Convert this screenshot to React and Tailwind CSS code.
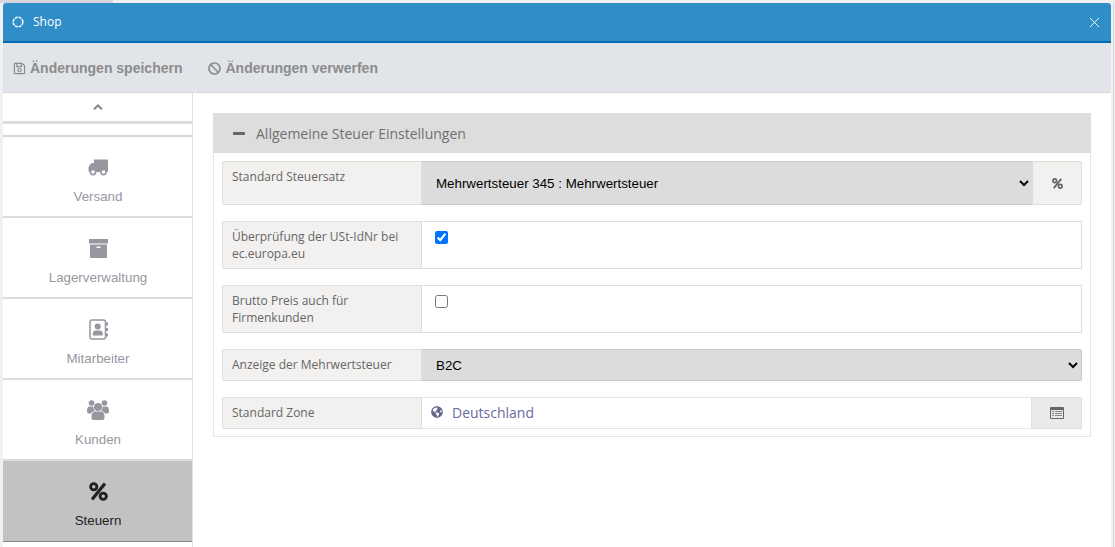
import React from "react";
import { FaGlobeAmericas, FaRegSave, FaBan } from "react-icons/fa";
import { X } from "lucide-react";

const TruckIcon = () => (
  <svg width="20" height="17" viewBox="0 0 20 17" fill="currentColor">
    <path d="M6 0.5h13a1 1 0 0 1 1 1V12a1 1 0 0 1-1 1H2a1.500 1.500 0 0 1-1.500-1.500V8.500L2.500 5C3 4.200 3.600 4 4.500 4H6z" />
    <circle cx="5" cy="13" r="2.600" fill="white" stroke="currentColor" strokeWidth="1.600" />
    <circle cx="15.500" cy="13" r="2.600" fill="white" stroke="currentColor" strokeWidth="1.600" />
  </svg>
);

const ArchiveIcon = () => (
  <svg width="19" height="19" viewBox="0 0 19 19" fill="currentColor">
    <rect x="0" y="0" width="19" height="4.500" />
    <path d="M1 5.500h17V18a1 1 0 0 1-1 1H2a1 1 0 0 1-1-1z" />
    <rect x="7.500" y="7.500" width="4" height="1.500" rx="0.500" fill="white" />
  </svg>
);

const AddressIcon = () => (
  <svg width="19" height="21" viewBox="0 0 19 21" fill="currentColor">
    <rect x="1" y="1" width="15.500" height="19" rx="2" fill="none" stroke="currentColor" strokeWidth="1.500" />
    <circle cx="8.700" cy="7.500" r="3" />
    <path d="M3.800 16.500v-2.200c0-1.600 1.200-2.800 2.800-2.800h4.200c1.600 0 2.900 1.200 2.900 2.800v2.200z" />
    <rect x="17" y="3.500" width="2" height="3" />
    <rect x="17" y="9" width="2" height="3" />
    <rect x="17" y="14.500" width="2" height="3" />
  </svg>
);

const UsersIcon = () => (
  <svg width="22" height="20" viewBox="0 0 22 20" fill="currentColor">
    <circle cx="4.500" cy="3" r="2.800" />
    <circle cx="17.500" cy="3" r="2.800" />
    <circle cx="11" cy="7" r="4" />
    <path d="M0 10.500C0 8 1 6.500 2.500 6.500h3c.4 0 .8.100 1 .3-.2 1.400.5 3 1.400 3.900-2 .6-3.400 1.600-4 2.800H1.500C.6 13.500 0 12.500 0 10.500z" />
    <path d="M22 10.500c0-2.500-1-4-2.500-4h-3c-.4 0-.8.100-1 .3.2 1.400-.5 3-1.400 3.900 2 .6 3.400 1.600 4 2.800h2.400c.9 0 1.500-1 1.500-3z" />
    <path d="M4.500 16c0-3 1.700-4.500 3.500-4.500h6c1.800 0 3.500 1.500 3.500 4.500v2c0 1.200-.8 2-2 2h-9c-1.200 0-2-.8-2-2z" />
  </svg>
);

const PercentIcon = ({ size }) => (
  <svg width={size} height={size} viewBox="0 0 20 20" fill="none" stroke="currentColor">
    <circle cx="5" cy="5" r="3.300" strokeWidth="3" />
    <circle cx="15" cy="15" r="3.300" strokeWidth="3" />
    <path d="M16.800 1.500L3.200 18.500" strokeWidth="3.400" />
  </svg>
);

const ListIcon = () => (
  <svg width="14" height="12" viewBox="0 0 14 12">
    <rect x="0" y="0" width="14" height="12" rx="1" fill="#666" />
    <rect x="1" y="3" width="12" height="8" fill="#e9e9e9" />
    <rect x="2" y="4" width="2" height="1" fill="#888" />
    <rect x="5" y="4" width="7" height="1" fill="#888" />
    <rect x="2" y="6" width="2" height="1" fill="#888" />
    <rect x="5" y="6" width="7" height="1" fill="#888" />
    <rect x="2" y="8" width="2" height="1" fill="#888" />
    <rect x="5" y="8" width="7" height="1" fill="#888" />
  </svg>
);

const menuItems = [
  { label: "Versand", icon: <TruckIcon /> },
  { label: "Lagerverwaltung", icon: <ArchiveIcon /> },
  { label: "Mitarbeiter", icon: <AddressIcon /> },
  { label: "Kunden", icon: <UsersIcon /> },
];

const Label = ({ children, className = "" }) => (
  <div className={`w-[200px] shrink-0 bg-[#f2f1f0] border border-[#e0dcd8] rounded-l-[2px] px-[9px] text-[12px] leading-[17px] text-[#666] font-['Open_Sans',sans-serif] ${className}`}>
    {children}
  </div>
);

const App = () => {
  return (
    <div className="w-[1115px] h-[547px] overflow-hidden bg-[#f1f1f1]">
      {/* Page behind the window */}
      <div className="h-[3px] w-[113px] bg-[#d6d6da]" />
      <div className="flex pl-[3px]">
        <div className="w-[1108px] h-[544px] flex flex-col bg-white rounded-t-[3px] overflow-hidden">
          {/* Title bar */}
          <div className="h-[40px] shrink-0 flex items-center justify-between bg-[#2f8dc7] border-b-2 border-[#0069b4] pl-[9px] pr-[8px] text-white">
            <div className="flex items-center gap-[9px]">
              <svg width="12" height="12" viewBox="0 0 12 12" fill="none">
                <circle cx="6" cy="6" r="4.800" stroke="white" strokeWidth="1.600" strokeDasharray="2.900 0.870" />
              </svg>
              <span className="text-[12px] font-['Open_Sans',sans-serif]">Shop</span>
            </div>
            <X size={17} strokeWidth={1.300} />
          </div>

          {/* Toolbar */}
          <div className="h-[50px] shrink-0 flex items-center gap-[26px] bg-[#e1e4e9] border-b border-[#d8d8d8] pl-[10px] pt-[2px] text-[14px] font-bold text-[#8c8c8c] font-['Liberation_Sans',sans-serif]">
            <div className="flex items-center gap-[4px]">
              <FaRegSave className="text-[13px]" />
              <span>Änderungen speichern</span>
            </div>
            <div className="flex items-center gap-[4px]">
              <FaBan className="text-[13px]" />
              <span>Änderungen verwerfen</span>
            </div>
          </div>

          <div className="flex-1 flex min-h-0">
            {/* Sidebar */}
            <div className="w-[190px] shrink-0 border-r border-[#e0e0e0] font-['Liberation_Sans',sans-serif] text-[13.333px]">
              <div className="h-[28px] flex items-center justify-center text-[#888] border-b-[3px] border-[#dcdcdc] box-content">
                <svg width="10" height="6" viewBox="0 0 10 6" fill="none" stroke="currentColor" strokeWidth="2">
                  <path d="M1 5.300L5 1.500L9 5.300" />
                </svg>
              </div>
              <div className="h-[13px] border-b-2 border-[#d8d8d8]" />
              {menuItems.map((item) => (
                <div key={item.label} className="h-[81px] flex flex-col items-center pt-[19px] pl-px text-[#97979f] border-b-2 border-[#dcdcdc]">
                  <div className="h-[22px] flex items-center justify-center">{item.icon}</div>
                  <span className="mt-[9px] leading-[20px]">{item.label}</span>
                </div>
              ))}
              <div className="h-[81px] flex flex-col items-center pt-[19px] pl-px bg-[#c2c2c2] text-[#222] border-b-[1px] border-[#888]">
                <div className="h-[22px] flex items-center justify-center">
                  <PercentIcon size={19} />
                </div>
                <span className="mt-[9px] leading-[20px]">Steuern</span>
              </div>
            </div>

            {/* Content */}
            <div className="flex-1 pt-[20px] pl-[20px] pr-[20px]">
              <div className="border border-[#e5e5e5] border-t-0 pb-[7px]">
                <div className="h-[40px] -mx-px flex items-center bg-[#dddddd] pl-[20px] text-[#707070] text-[14px] font-['Open_Sans',sans-serif]">
                  <div className="w-[12px] h-[3px] rounded-[1px] bg-[#666] mr-[11px]" />
                  <span>Allgemeine Steuer Einstellungen</span>
                </div>

                <div className="px-[8px] pt-[8px] flex flex-col gap-[16px]">
                  <div className="flex h-[44px]">
                    <Label className="pt-[6px]">Standard Steuersatz</Label>
                    <select className="flex-1 min-w-0 bg-[#dcdcdc] border-y border-[#c9c9c9] pl-[10px] text-[13.333px] text-black font-['Liberation_Sans',sans-serif]">
                      <option>Mehrwertsteuer 345 : Mehrwertsteuer</option>
                    </select>
                    <div className="w-[50px] shrink-0 flex items-center justify-center bg-[#f2f1f0] border border-[#e0dcd8] rounded-r-[2px] text-[#666]">
                      <PercentIcon size={11} />
                    </div>
                  </div>

                  <div className="flex h-[48px]">
                    <Label className="pt-[6px]">Überprüfung der USt-IdNr bei ec.europa.eu</Label>
                    <div className="flex-1 border border-l-0 border-[#e0dedc] pl-[13px] pt-[9px]">
                      <input type="checkbox" defaultChecked className="block w-[13px] h-[13px] accent-[#0075ff]" />
                    </div>
                  </div>

                  <div className="flex h-[48px]">
                    <Label className="pt-[6px]">Brutto Preis auch für Firmenkunden</Label>
                    <div className="flex-1 border border-l-0 border-[#e0dedc] pl-[13px] pt-[9px]">
                      <input type="checkbox" className="block w-[13px] h-[13px]" />
                    </div>
                  </div>

                  <div className="flex h-[32px]">
                    <Label className="flex items-center pb-[2px]">Anzeige der Mehrwertsteuer</Label>
                    <select className="flex-1 min-w-0 bg-[#dcdcdc] border border-l-0 border-[#c9c9c9] rounded-r-[2px] pl-[10px] text-[13.333px] text-black font-['Liberation_Sans',sans-serif]">
                      <option>B2C</option>
                    </select>
                  </div>

                  <div className="flex h-[32px]">
                    <Label className="flex items-center pb-[2px]">Standard Zone</Label>
                    <div className="flex-1 flex items-center border-y border-[#e5e5e5] pl-[9px] pb-[2px] text-[14px] text-[#6a6aa0] font-['Open_Sans',sans-serif]">
                      <FaGlobeAmericas className="text-[12px] text-[#666688] mr-[9px]" />
                      <span>Deutschland</span>
                    </div>
                    <div className="w-[51px] shrink-0 flex items-center justify-center bg-[#eaeaea] border border-[#e0e0e0]">
                      <ListIcon />
                    </div>
                  </div>
                </div>
              </div>
            </div>
          </div>
        </div>
        {/* Right edge of the page behind */}
        <div className="w-[2px] shrink-0" />
        <div className="w-px h-[544px] shrink-0 bg-[#d4d4d4]" />
      </div>
    </div>
  );
};

export default App;
